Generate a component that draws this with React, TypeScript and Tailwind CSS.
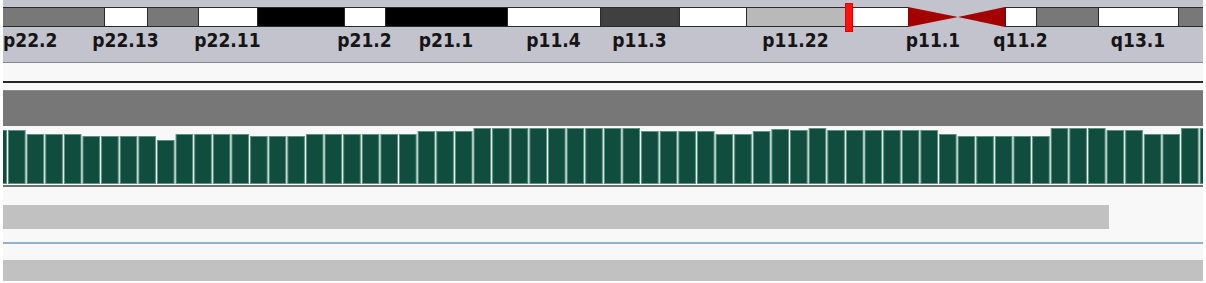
import React from "react"

type Band = {
  w: string
  fill: string
  label?: string
  align?: string
  kind?: "p" | "q"
}

const bands: Band[] = [
  { w: "w-[101px]", fill: "bg-[#787878]", label: "p22.2", align: "justify-start" },
  { w: "w-[43px]", fill: "bg-white", label: "p22.13" },
  { w: "w-[51px]", fill: "bg-[#787878]" },
  { w: "w-[59px]", fill: "bg-white", label: "p22.11" },
  { w: "w-[87px]", fill: "bg-black" },
  { w: "w-[41px]", fill: "bg-white", label: "p21.2" },
  { w: "w-[122px]", fill: "bg-black", label: "p21.1" },
  { w: "w-[93px]", fill: "bg-white", label: "p11.4" },
  { w: "w-[79px]", fill: "bg-[#404040]", label: "p11.3" },
  { w: "w-[67px]", fill: "bg-white" },
  { w: "w-[99px]", fill: "bg-[#b9b9b9]", label: "p11.22" },
  { w: "w-[63px]", fill: "bg-white" },
  { w: "w-[50px]", fill: "", label: "p11.1", kind: "p" },
  { w: "w-[47px]", fill: "", kind: "q" },
  { w: "w-[31px]", fill: "bg-white", label: "q11.2" },
  { w: "w-[62px]", fill: "bg-[#787878]" },
  { w: "w-[80px]", fill: "bg-white", label: "q13.1" },
  { w: "w-[25px]", fill: "bg-[#787878]" },
]

// bar tops (page y), first one is the partial bar at the left edge
const tops = [
  130, 130, 134, 134, 134, 136, 136, 136, 136, 140, 134, 134, 134, 134, 136, 136, 136, 134, 134, 134, 134, 134,
  134, 131, 131, 131, 128, 128, 128, 128, 128, 128, 128, 128, 128, 131, 131, 131, 131, 134, 134, 131, 129, 130,
  128, 130, 130, 130, 130, 130, 130, 134, 136, 136, 136, 136, 136, 128, 128, 128, 130, 130, 134, 134, 128, 128,
]

function Centromere({ kind }: { kind: "p" | "q" }) {
  return (
    <svg viewBox="0 0 50 20" preserveAspectRatio="none" className="h-[20px] w-full block">
      {kind === "p" ? (
        <polygon points="0,0 50,10 0,20" fill="#a50000" />
      ) : (
        <polygon points="0,10 50,0 50,20" fill="#a50000" />
      )}
    </svg>
  )
}

function Ideogram() {
  return (
    <div className="relative h-[63px] bg-[#c3c3cd] border-b border-[#858590] pt-[7px]">
      <div className="flex">
        {bands.map((b, i) => (
          <div key={i} className={`${b.w} flex flex-col shrink-0`}>
            {b.kind ? (
              <Centromere kind={b.kind} />
            ) : (
              <div className={`h-[20px] ${b.fill} border-y border-[#2a2a2a] ${i > 0 ? "border-l" : ""}`} />
            )}
            <div className={`mt-[4px] h-[19px] flex ${b.align ?? "justify-center"} whitespace-nowrap`}>
              {b.label && (
                <span className="text-[19px] leading-[19px] font-bold text-[#151515] [font-family:'DejaVu_Sans_Condensed','DejaVu_Sans',sans-serif]">
                  {b.label}
                </span>
              )}
            </div>
          </div>
        ))}
      </div>
      <div className="absolute left-[842px] top-[3px] w-[8px] h-[29px] bg-[#ff1010] border border-[#e00000]" />
    </div>
  )
}

function Coverage() {
  return (
    <svg viewBox="0 0 1200 58" className="block w-[1200px] h-[58px]">
      {tops.map((t, i) => {
        const k = i - 1
        const x = 5 + k * 18.62
        return (
          <rect
            key={i}
            x={x + 0.5}
            y={t - 126 + 0.5}
            width={16.6}
            height={184 - t - 1}
            fill="#104d3f"
            stroke="#5a917f"
            strokeWidth={1}
          />
        )
      })}
    </svg>
  )
}

export default function App() {
  return (
    <div className="w-[1206px] h-[283px] bg-white px-[3px] overflow-hidden">
      <div className="bg-[#f8f8f8] h-[283px] flex flex-col">
        <Ideogram />
        <div className="h-[18px]" />
        <div className="h-[2px] bg-[#262626]" />
        <div className="h-[7px]" />
        <div className="h-[36px] bg-[#777777] border-t border-[#8c8c8c]" />
        <Coverage />
        <div className="h-px" />
        <div className="h-[2px] bg-[#727272]" />
        <div className="h-[18px]" />
        <div className="h-[24px] w-[1106px] bg-[#c1c1c1]" />
        <div className="h-[13px]" />
        <div className="h-[2px] bg-[#8fb3cc]" />
        <div className="h-[16px]" />
        <div className="h-[21px] bg-[#c1c1c1]" />
        <div className="flex-1 bg-white" />
      </div>
    </div>
  )
}
